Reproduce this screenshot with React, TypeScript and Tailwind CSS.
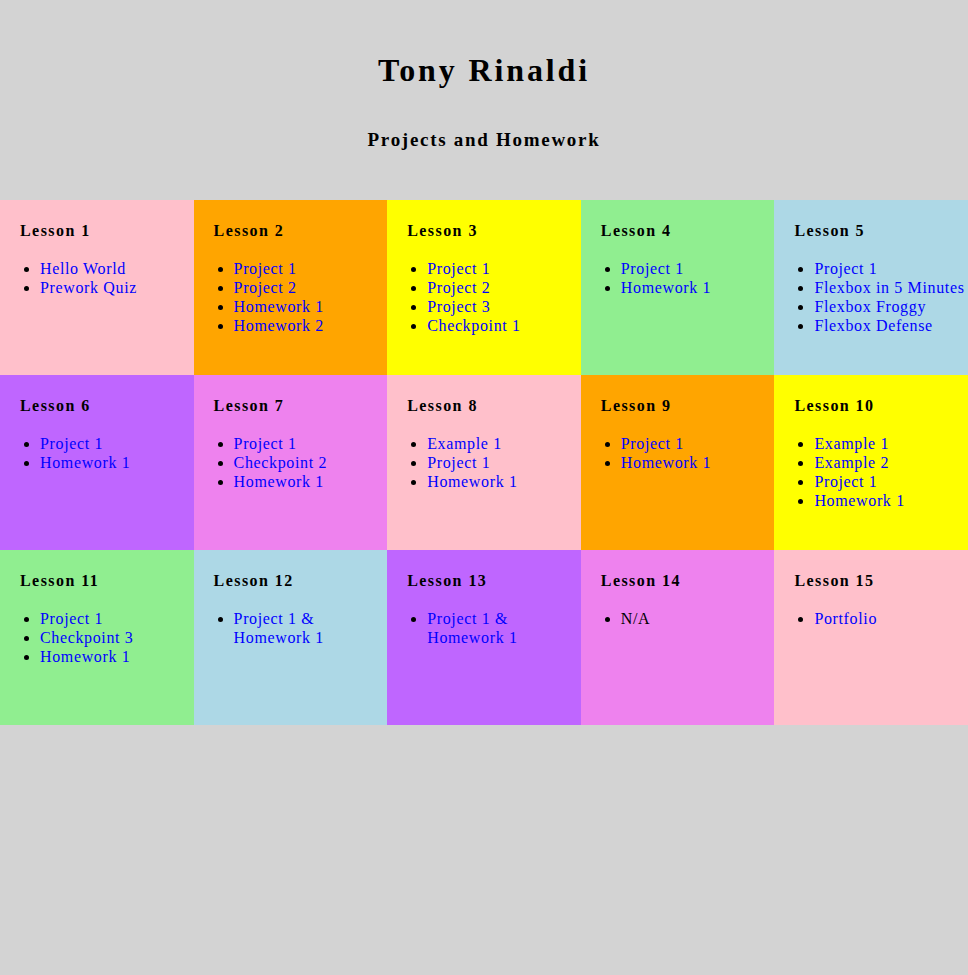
const lessons: { title: string; color: string; items: string[]; plain?: boolean }[] = [
	{ title: "Lesson 1", color: "bg-[#ffc0cb]", items: ["Hello World", "Prework Quiz"] },
	{ title: "Lesson 2", color: "bg-[#ffa500]", items: ["Project 1", "Project 2", "Homework 1", "Homework 2"] },
	{ title: "Lesson 3", color: "bg-[#ffff00]", items: ["Project 1", "Project 2", "Project 3", "Checkpoint 1"] },
	{ title: "Lesson 4", color: "bg-[#90ee90]", items: ["Project 1", "Homework 1"] },
	{ title: "Lesson 5", color: "bg-[#add8e6]", items: ["Project 1", "Flexbox in 5 Minutes", "Flexbox Froggy", "Flexbox Defense"] },
	{ title: "Lesson 6", color: "bg-[#bf66ff]", items: ["Project 1", "Homework 1"] },
	{ title: "Lesson 7", color: "bg-[#ee82ee]", items: ["Project 1", "Checkpoint 2", "Homework 1"] },
	{ title: "Lesson 8", color: "bg-[#ffc0cb]", items: ["Example 1", "Project 1", "Homework 1"] },
	{ title: "Lesson 9", color: "bg-[#ffa500]", items: ["Project 1", "Homework 1"] },
	{ title: "Lesson 10", color: "bg-[#ffff00]", items: ["Example 1", "Example 2", "Project 1", "Homework 1"] },
	{ title: "Lesson 11", color: "bg-[#90ee90]", items: ["Project 1", "Checkpoint 3", "Homework 1"] },
	{ title: "Lesson 12", color: "bg-[#add8e6]", items: ["Project 1 & Homework 1"] },
	{ title: "Lesson 13", color: "bg-[#bf66ff]", items: ["Project 1 & Homework 1"] },
	{ title: "Lesson 14", color: "bg-[#ee82ee]", items: ["N/A"], plain: true },
	{ title: "Lesson 15", color: "bg-[#ffc0cb]", items: ["Portfolio"] },
]

function App() {
	return (
		<div className="min-h-[975px] bg-[#d3d3d3] text-black font-['Liberation_Serif',serif]">

			<header className="flex flex-col items-center pt-[52px] pb-[49px]">
				<h1 className="text-[32px] leading-[36px] font-bold tracking-[0.09em]">Tony Rinaldi</h1>
				<h3 className="mt-[41px] text-[19px] leading-[22px] font-bold tracking-[0.09em]">Projects and Homework</h3>
			</header>

			<div className="grid grid-cols-5">
				{lessons.map(lesson => (
					<div key={lesson.title} className={`${lesson.color} h-[175px] pl-5 pt-[22px]`}>
						<h4 className="text-[16px] leading-[18px] font-bold tracking-[0.09em]">{lesson.title}</h4>
						<ul className="mt-[19px] pl-5 list-disc text-[16px] leading-[19px] tracking-[0.04em]">
							{lesson.items.map(item => (
								<li key={item}>
									{lesson.plain
										? <span>{item}</span>
										: <a href="#" className="text-[#0000ff]">{item}</a>}
								</li>
							))}
						</ul>
					</div>
				))}
			</div>

		</div>
	)
}

export default App
